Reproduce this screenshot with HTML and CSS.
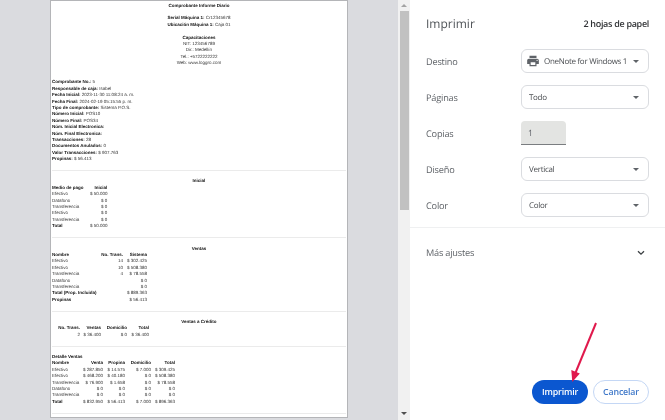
FILE: index.html
```html
<!DOCTYPE html>
<html lang="es">
<head>
<meta charset="utf-8">
<title>Imprimir</title>
<link rel="stylesheet" href="styles.css">
</head>
<body>
<main class="preview">
  <article class="page">
    <section class="sec first">
      <div class="ctr">
        <p class="b">Comprobante Informe Diario</p>
        <p>&nbsp;</p>
        <p><b>Serial Máquina 1:</b> Cr12345678</p>
        <p><b>Ubicación Máquina 1:</b> Caja 01</p>
        <p>&nbsp;</p>
        <p class="b">Capacitaciones</p>
        <p>NIT: 123456789</p>
        <p>Dir.: Medellín</p>
        <p>Tel.: +5722222222</p>
        <p>Web: www.loggro.com</p>
        <p>&nbsp;</p>
        <p>&nbsp;</p>
      </div>
      <p><b>Comprobante No.:</b> 5</p>
      <p><b>Responsable de caja:</b> Isabel</p>
      <p><b>Fecha Inicial:</b> 2023-11-30 11:08:24 a. m.</p>
      <p><b>Fecha Final:</b> 2024-02-19 05:15:55 p. m.</p>
      <p><b>Tipo de comprobante:</b> Sistema P.O.S.</p>
      <p><b>Número Inicial:</b> POS10</p>
      <p><b>Número Final:</b> POS34</p>
      <p><b>Núm. Inicial Electronica:</b></p>
      <p><b>Núm. Final Electronica:</b></p>
      <p><b>Transacciones:</b> 28</p>
      <p><b>Documentos Anulados:</b> 0</p>
      <p><b>Valor Transacciones:</b> $ 907.763</p>
      <p><b>Propinas:</b> $ 56.413</p>
    </section>

    <section class="sec">
      <p class="ctr b">Inicial</p>
      <div class="t t-ini">
        <b class="l">Medio de pago</b><b>Inicial</b>
        <span class="l">Efectivo</span><span>$ 50.000</span>
        <span class="l">Datafono</span><span>$ 0</span>
        <span class="l">Transferencia</span><span>$ 0</span>
        <span class="l">Efectivo</span><span>$ 0</span>
        <span class="l">Transferencia</span><span>$ 0</span>
        <b class="l">Total</b><span>$ 50.000</span>
      </div>
    </section>

    <section class="sec">
      <p class="ctr b">Ventas</p>
      <div class="t t-ven">
        <b class="l">Nombre</b><b>No. Trans.</b><b>Sistema</b>
        <span class="l">Efectivo</span><span>14</span><span>$ 302.425</span>
        <span class="l">Efectivo</span><span>10</span><span>$ 508.380</span>
        <span class="l">Transferencia</span><span>4</span><span>$ 78.558</span>
        <span class="l">Datafono</span><span></span><span>$ 0</span>
        <span class="l">Transferencia</span><span></span><span>$ 0</span>
        <b class="l">Total (Prop. Incluida)</b><span></span><span>$ 889.363</span>
        <b class="l">Propinas</b><span></span><span>$ 56.413</span>
      </div>
    </section>

    <section class="sec">
      <p class="ctr b">Ventas a Crédito</p>
      <div class="t t-cre">
        <b>No. Trans.</b><b>Ventas</b><b>Domicilio</b><b>Total</b>
        <span>2</span><span>$ 36.400</span><span>$ 0</span><span>$ 36.400</span>
      </div>
    </section>

    <section class="sec">
      <p class="b">Detalle Ventas</p>
      <div class="t t-det">
        <b class="l">Nombre</b><b>Venta</b><b>Propina</b><b>Domicilio</b><b>Total</b>
        <span class="l">Efectivo</span><span>$ 287.850</span><span>$ 14.575</span><span>$ 7.000</span><span>$ 309.425</span>
        <span class="l">Efectivo</span><span>$ 468.200</span><span>$ 40.180</span><span>$ 0</span><span>$ 508.380</span>
        <span class="l">Transferencia</span><span>$ 76.900</span><span>$ 1.658</span><span>$ 0</span><span>$ 78.558</span>
        <span class="l">Datafono</span><span>$ 0</span><span>$ 0</span><span>$ 0</span><span>$ 0</span>
        <span class="l">Transferencia</span><span>$ 0</span><span>$ 0</span><span>$ 0</span><span>$ 0</span>
        <b class="l">Total</b><span>$ 832.950</span><span>$ 56.413</span><span>$ 7.000</span><span>$ 896.363</span>
      </div>
    </section>
    <div class="rule-end"></div>
  </article>
</main>

<div class="scrollbar" aria-hidden="true">
  <i class="arrow up"></i>
  <div class="thumb"></div>
  <i class="arrow down"></i>
</div>

<aside class="panel">
  <header class="head">
    <h1>Imprimir</h1>
    <strong>2 hojas de papel</strong>
  </header>
  <div class="form">
    <div class="row">
      <span class="label">Destino</span>
      <div class="select">
        <svg class="printer" viewBox="0 0 24 24"><path d="M19 8H5c-1.66 0-3 1.34-3 3v6h4v4h12v-4h4v-6c0-1.66-1.34-3-3-3zm-3 11H8v-5h8v5zm3-7c-.55 0-1-.45-1-1s.45-1 1-1 1 .45 1 1-.45 1-1 1zm-1-9H6v4h12V3z"/></svg>
        <span class="val">OneNote for Windows 1</span><i class="caret"></i>
      </div>
    </div>
    <div class="row">
      <span class="label">Páginas</span>
      <div class="select"><span class="val">Todo</span><i class="caret"></i></div>
    </div>
    <div class="row">
      <span class="label">Copias</span>
      <div class="copies">1</div>
    </div>
    <div class="row">
      <span class="label">Diseño</span>
      <div class="select"><span class="val">Vertical</span><i class="caret"></i></div>
    </div>
    <div class="row">
      <span class="label">Color</span>
      <div class="select"><span class="val">Color</span><i class="caret"></i></div>
    </div>
  </div>
  <div class="more">
    <span class="label">Más ajustes</span>
    <svg class="chev" viewBox="0 0 8 6"><path d="M1 1.2 4 4.2 7 1.2"/></svg>
  </div>
  <footer class="actions">
    <button class="btn primary">Imprimir</button>
    <button class="btn ghost">Cancelar</button>
  </footer>
</aside>

<svg class="annot" viewBox="0 0 665 420" aria-hidden="true">
  <path class="shaft" d="M596 323 575 374"/>
  <polygon class="head-a" points="572.3,382 571.3,370 579.8,373.6"/>
</svg>
</body>
</html>
```

FILE: styles.css
```css
* { box-sizing: border-box; margin: 0; padding: 0; }
html, body { height: 100%; overflow: hidden; }
body {
  position: relative;
  display: flex;
  width: 665px;
  height: 420px;
  background: #dadbdf;
  font-family: "Open Sans", "Noto Sans", sans-serif;
  text-rendering: geometricPrecision;
}

/* preview */
.preview {
  width: 398px;
  flex: none;
  padding: 1px 51px 0;
}
.page {
  width: 296px;
  height: 416px;
  background: #fff;
  box-shadow: 0 0 0 1px #b4b5b8;
  padding: 1.5px 1px 0;
  font: 4.5px/6.4px "Liberation Sans", Arial, sans-serif;
  color: #333;
  filter: blur(.3px);
  white-space: nowrap;
}
.page b, .page .b { font-weight: 700; color: #111; }
.ctr { text-align: center; }
.sec { padding: 7.3px 0 7.5px; border-top: 1px solid #ebebeb; }
.sec.first { padding-top: 0; border-top: 0; }
.rule-end { border-top: 1px solid #ebebeb; }
.t { display: grid; }
.t > * { text-align: right; }
.t > .l { text-align: left; }
.t-ini { grid-template-columns: 38px 17.3px; }
.t-ven { grid-template-columns: 43px 28px 24px; }
.t-cre { grid-template-columns: 28px 21px 26px 22px; }
.t-det { grid-template-columns: 25px 26px 22px 26px 24px; }

/* scrollbar */
.scrollbar {
  width: 12px;
  flex: none;
  background: #f1f1f1;
  display: flex;
  flex-direction: column;
  align-items: center;
  padding-top: 4px;
}
.thumb { width: 9px; height: 199px; margin-top: 4px; background: #c1c1c1; }
.arrow { width: 0; height: 0; border-left: 3px solid transparent; border-right: 3px solid transparent; }
.arrow.up { border-bottom: 3px solid #a3a3a3; }
.arrow.down { border-top: 3px solid #505050; margin-top: auto; margin-bottom: 5px; }

/* panel */
.panel {
  width: 255px;
  flex: none;
  display: flex;
  flex-direction: column;
  background: #fff;
  padding-bottom: 16px;
  color: #3c4043;
  filter: blur(.2px);
}
.head {
  display: flex;
  justify-content: space-between;
  align-items: flex-start;
  padding: 15px 16px 0;
  height: 49px;
}
.head h1 { font-size: 12px; line-height: 18px; font-weight: 400; color: #505458; }
.head strong { font-size: 9px; line-height: 18px; font-weight: 600; letter-spacing: -.3px; color: #303235; }
.form { display: flex; flex-direction: column; gap: 12px; padding: 0 16px; }
.row { display: flex; align-items: center; height: 24px; }
.label { font-size: 9.2px; letter-spacing: -.2px; color: #5f6368; width: 95px; flex: none; }
.select {
  flex: 1;
  display: flex;
  align-items: center;
  height: 24px;
  padding: 0 7px;
  border: 1px solid #dadce0;
  border-radius: 6px;
  font-size: 8px;
  letter-spacing: -.3px;
  color: #4a4d51;
  min-width: 0;
}
.val { flex: 1; min-width: 0; white-space: nowrap; }
.printer { width: 14px; height: 14px; margin: 0 4px 0 -3px; fill: #5f6368; flex: none; }
.caret { width: 0; height: 0; border-left: 3px solid transparent; border-right: 3px solid transparent; border-top: 3px solid #5f6368; margin-right: 2px; }
.copies {
  width: 45px;
  height: 24px;
  background: #e3e4e2;
  border-bottom: 1px solid #7a7d80;
  border-radius: 4px 4px 0 0;
  padding-left: 7px;
  font-size: 8.6px;
  line-height: 24px;
  color: #5f6368;
}
.more {
  margin-top: 10px;
  border-top: 1px solid #eff0f1;
  display: flex;
  align-items: center;
  justify-content: space-between;
  padding: 0 20px 0 16px;
  height: 50px;
}
.chev { width: 8px; height: 6px; fill: none; stroke: #3c4043; stroke-width: 1.3; }
.actions { margin-top: auto; display: flex; justify-content: flex-end; gap: 5px; padding: 0 16px; }
.btn {
  width: 56px;
  height: 24px;
  border-radius: 12px;
  font: 600 8.8px "Open Sans", "Noto Sans", sans-serif;
  letter-spacing: -.15px;
}
.primary { background: #0b57d0; color: #fff; border: 0; }
.ghost { background: #fff; color: #3f78c9; border: 1px solid #c4d7f5; }

/* annotation arrow drawn over the screenshot */
.annot { position: absolute; left: 0; top: 0; width: 665px; height: 420px; pointer-events: none; }
.shaft { stroke: #e0194c; stroke-width: 2; fill: none; }
.head-a { fill: #e0194c; }
```
